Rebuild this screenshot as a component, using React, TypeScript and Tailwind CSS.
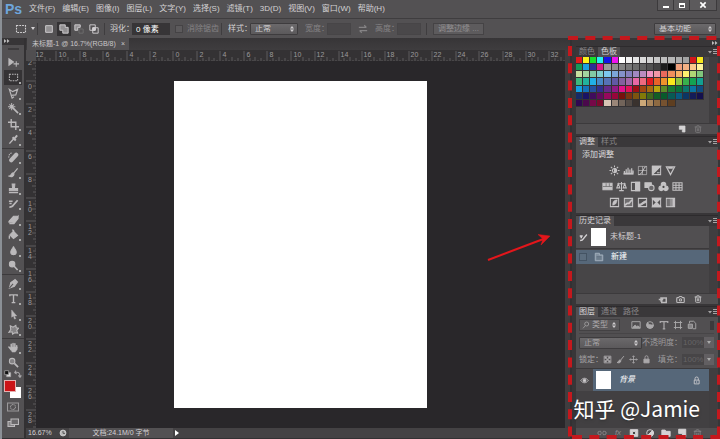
import type { ReactNode } from 'react'
import { Camera, Trash2 } from 'lucide-react'

const MENUS = ['文件(F)', '编辑(E)', '图像(I)', '图层(L)', '文字(Y)', '选择(S)', '滤镜(T)', '3D(D)', '视图(V)', '窗口(W)', '帮助(H)']

const SWATCHES = [
  '#e01a1c #fdf11a #18e02c #25f0f0 #1414e6 #ee12ee #ffffff #f1f1f1 #e4e4e4 #dadada #d0d0d0 #c7c7c7 #bebebe #b6b6b6 #adadad #a2a2a2 #d3181c #f8e71c',
  '#149a58 #1c9fe0 #2b2f96 #d8158c #9a9a9a #8e8e8e #838383 #787878 #6c6c6c #606060 #525252 #424242 #1d1d1d #000000 #f0a07c #f4b184 #f9c88c #fdf39a',
  '#c6dfa0 #a3d4a0 #82cba4 #7fcdca #7cc6ee #7ca6d8 #8492ca #8580bd #a188c0 #bb8cc0 #ee94c2 #f097a6 #ea6a5c #f0905c #f9b266 #fdf170 #b0d676 #80c67c',
  '#3cb87c #22b29c #22b0e6 #4688c6 #5672b6 #6258a4 #84609e #a466a8 #e868a4 #ee6a80 #e01c24 #e8622a #ee922c #fbe81c #8ec63e #38b04c #14a252 #12a090',
  '#149ee0 #1472b8 #24509e #302e8c #642a88 #901a84 #e0128a #e01458 #9c1014 #a04612 #a86a12 #b8a40e #5a8a28 #187a34 #0c7238 #0c746c #0a74a2 #104c80',
  '#162a66 #1a1464 #400c5c #620a5c #96085c #98063a #78100c #7a3410 #7c5410 #827a08 #42681c #145e26 #085a2c #085a54 #085a80 #0c3664 #141c58 #14104e',
  '#2e0850 #4a084c #760848 #7c0a2c #d8c4b4 #9a8678 #72645a #544a44 #3a322e #cca878 #a8845a #8e6a42 #765230 #5e3e20',
].map((row) => row.split(' '))

// width of one ruler unit
const UNIT = 11.72

function Icon({ children, className = 'size-3' }: { children: ReactNode; className?: string }) {
  return (
    <svg viewBox="0 0 12 12" className={`shrink-0 ${className}`} fill="none" stroke="currentColor" strokeWidth="1.1" aria-hidden="true">
      {children}
    </svg>
  )
}

const marquee = <path d="M1.5 2.5h9v7h-9z" strokeDasharray="1.8 1" />
const brush = <path d="M10.5 1.5 6 7M5.5 6.5c-2 0-1.5 3-4 3.5 2 1 5 .3 5-2.5z" fill="currentColor" strokeWidth="1.3" />
const move = <path d="M6 1v10M1 6h10M4.5 2.5 6 1l1.5 1.5M4.5 9.5 6 11l1.5-1.5M2.5 4.5 1 6l1.5 1.5M9.5 4.5 11 6 9.5 7.5" />
const newPage = <path d="M2 1.5h8.5v9H6.5v-4H2z" fill="currentColor" />

const TOOL_GROUPS: { name: string; icon: ReactNode }[][] = [
  [
    { name: 'Move', icon: <><path d="M1 2v7l5-3.5z" fill="currentColor" /><path d="M9 4.5v6M6 7.5h6" /></> },
    { name: 'Marquee', icon: marquee },
    { name: 'Lasso', icon: <path d="M1.5 1.5 5 4l5.500-2.500-2 6-5 .5zM3.500 8l1 3 2-1.500" strokeWidth="1.3" /> },
    { name: 'Magic wand', icon: <><path d="m5 5 6 6" strokeWidth="1.8" /><path d="M4 0v8M0 4h8M1.5 1.5l5 5M6.5 1.5l-5 5" /></> },
    { name: 'Crop', icon: <path d="M3.5 0v8.5H12M0 3.5h8.5V12" strokeWidth="1.5" /> },
    { name: 'Eyedropper', icon: <><path d="m1.5 10.5 5-5.5" strokeWidth="1.6" /><path d="m5 3.5 3.5 3.5M7 5l3-3.5" strokeWidth="2.2" /></> },
  ],
  [
    { name: 'Healing brush', icon: <><path d="m3.5 9 5.5-6" strokeWidth="4.5" strokeLinecap="round" /><path d="M4 1C1.500 1.500 .5 4 1 6.500" strokeDasharray="1.5 1" /></> },
    { name: 'Brush', icon: brush },
    { name: 'Clone stamp', icon: <path d="M4.5 1h3l-.5 5h3.5v2.5h-9V6H5zM1 10.5h10" fill="currentColor" /> },
    { name: 'History brush', icon: <><path d="M10.5 2.5 6 7.500c-1 2-2.500 2.500-4.500 2.500" strokeWidth="1.9" /><path d="M1 3.5h4M1.5 6H4" strokeWidth="1.5" /></> },
    { name: 'Eraser', icon: <path d="m1 8 5-5.5h5l-5 6.5H1zM6 9l5-6.500V5L6.500 10.500H1.500" fill="currentColor" /> },
    { name: 'Paint bucket', icon: <><path d="m2 6.5 4-4L10.5 7l-4.5 3.5z" fill="currentColor" /><path d="M6 5V1.5L4.5 1M1.5 7v3.5" strokeWidth="1.5" /></> },
    { name: 'Blur', icon: <path d="M6 1.5c.5 2 3 4 3 6a3 3 0 0 1-6 0c0-2 2.5-4 3-6z" fill="currentColor" /> },
    { name: 'Dodge', icon: <><circle cx="4.5" cy="4.5" r="3" fill="currentColor" /><path d="m6.5 6.5 4 4.5" strokeWidth="1.7" /></> },
  ],
  [
    { name: 'Pen', icon: <><path d="M1.5 11 3 5l3.5-2.5 3 3L7 9z" fill="currentColor" /><path d="m7 1.5 3.5 3.5" strokeWidth="2" /><path d="m1.5 11 4-4.5" stroke="#535153" /></> },
    { name: 'Type', icon: <path d="M2 3.5V2h8v1.5M6 2v8.5M4 10.5h4" strokeWidth="1.5" /> },
    { name: 'Path selection', icon: <path d="M4 1v8l2-1.5 1 3.5 1.5-.5-1.5-3h2.5z" fill="currentColor" strokeWidth=".5" /> },
    { name: 'Custom shape', icon: <path d="m2.5 2 3 1.5 3-2 .5 2.500 2.500.5-2 2.500 1 3-3-.5-2.500 1.500-.5-2.500-3.500.5 2-3z" fill="#858385" strokeWidth="1.2" /> },
  ],
  [
    { name: 'Hand', icon: <><path d="M3.5 6V2.5M5.5 5.5v-4M7.5 5.5V2M9.5 6.5V4M1 5.5l2.5 3" strokeWidth="1.6" strokeLinecap="round" /><path d="M3 5.5h7V8l-2 3H4.5L3 8z" fill="currentColor" strokeWidth=".5" /></> },
    { name: 'Zoom', icon: <><circle cx="4.5" cy="4.5" r="3" fill="#858385" /><path d="m7 7 4 4" strokeWidth="1.9" /></> },
  ],
]

const ADJUSTMENTS: { name: string; icon: ReactNode }[][] = [
  [
    { name: 'Brightness', icon: <><circle cx="6" cy="6" r="2.2" /><path d="M6 3.8a2.2 2.2 0 0 1 0 4.4z" fill="currentColor" /><path d="M6 .5v2M6 9.5v2M.5 6h2M9.5 6h2M2 2l1.5 1.5M8.5 8.5 10 10M10 2 8.500 3.500M3.500 8.500 2 10" /></> },
    { name: 'Levels', icon: <><path d="M.5 9.5h11" strokeWidth="2" /><path d="M1.5 9V6.5M3.5 9V4.5M5.5 9V3M7.5 9V5M9.5 9V3.5M11 9V6" strokeWidth="1.3" /></> },
    { name: 'Curves', icon: <><path d="M1.5 1.5h9v9h-9zM1.5 6h9M6 1.5v9" strokeWidth=".7" /><path d="M1.5 10.5c6-.5 4-8 9-9" /></> },
    { name: 'Exposure', icon: <><path d="M1.5 1.5h9v9h-9z" /><path d="M1.5 1.5h9l-9 9zM6.5 8.5h3" fill="currentColor" /></> },
    { name: 'Vibrance', icon: <path d="M1.5 2h9L6 10.5zM3.5 3.5h5" strokeWidth="1.3" /> },
  ],
  [
    { name: 'Hue', icon: <><path d="M1 2.5h10v7H1z" fill="currentColor" /><path d="M1 6h10M4.5 2.5V6M8 2.5V6" stroke="#6a686a" strokeWidth=".8" /></> },
    { name: 'Color balance', icon: <path d="M6 1v9M3.5 10.5h5M1.5 3h9M2.5 3 .8 7.5h3.400zM9.500 3 7.800 7.500h3.400z" /> },
    { name: 'Black and white', icon: <><path d="M1.5 1.5h9v9h-9z" /><path d="M6 1.5h4.5v9H6z" fill="currentColor" /></> },
    { name: 'Photo filter', icon: <><path d="M1 2h7v5H1z" fill="currentColor" /><circle cx="8" cy="7.5" r="3" fill="#6a686a" /></> },
    { name: 'Channel mixer', icon: <><circle cx="6" cy="4" r="2.5" fill="currentColor" /><circle cx="3.5" cy="8" r="2.5" fill="currentColor" /><circle cx="8.5" cy="8" r="2.5" fill="currentColor" /><circle cx="6" cy="6.500" r="1.2" fill="#444" stroke="none" /></> },
    { name: 'Color lookup', icon: <path d="M1 2h10v8H1zM1 4.7h10M1 7.3h10M4.3 2v8M7.7 2v8" /> },
  ],
  [
    { name: 'Invert', icon: <><path d="M1.5 1.5h9v9h-9z" /><path d="M4 9c0-4 1-5.5 5-6-1 4-1 5-5 6z" fill="currentColor" strokeWidth=".5" /></> },
    { name: 'Posterize', icon: <><path d="M1.5 1.5h9v9h-9z" fill="#6f6d6f" /><path d="M2 9 4.5 7l2 0L10 3" strokeWidth="1.8" /></> },
    { name: 'Threshold', icon: <><path d="M1.5 1.5h9v9h-9z" /><path d="M2 8c4 0 4-3.5 8-4v2c-4 .5-4 3.500-8 3.500z" fill="currentColor" /></> },
    { name: 'Selective color', icon: <><path d="M1.5 1.5h9v9h-9zM1.5 1.5l9 9M10.5 1.5l-9 9" /><path d="M1.5 1.5h9L6 6zM1.5 10.5h9L6 6z" fill="currentColor" /></> },
    { name: 'Gradient map', icon: <><path d="M1.5 1.5h9v9h-9z" /><path d="M2 2h3v8H2z" fill="#737173" stroke="none" /><path d="M5 2h3v8H5z" fill="#939193" stroke="none" /><path d="M8 2h2.500v8H8z" fill="currentColor" stroke="none" /></> },
  ],
]

function UpDown() {
  return (
    <svg viewBox="0 0 4 6" className="pointer-events-none absolute right-1 top-1/2 h-[6px] w-1 -translate-y-1/2 fill-[#cfcdcf]" aria-hidden="true">
      <path d="M0 2.5 2 0l2 2.500zM0 3.500 2 6l2-2.500z" />
    </svg>
  )
}

function Select({ label, value, className }: { label: string; value: string; className: string }) {
  return (
    <div className={`relative h-3 ${className}`}>
      <select
        aria-label={label}
        className="block size-full appearance-none rounded-[1px] border border-[#3e3c3e] bg-linear-to-b from-[#6b696b] to-[#5b595b] pl-1 leading-none text-inherit"
      >
        <option>{value}</option>
      </select>
      <UpDown />
    </div>
  )
}

function Divider() {
  return <span className="h-3 w-px shrink-0 bg-[#3f3d3f]" />
}

function MenuBar() {
  return (
    <header className="flex h-[18px] items-center bg-[#535153] pl-[3px]">
      <span className="w-6 text-[14px] font-bold leading-none text-[#6ea6dc]">Ps</span>
      <nav className="flex gap-[7px] whitespace-nowrap">
        {MENUS.map((menu) => (
          <button key={menu} type="button">{menu}</button>
        ))}
      </nav>
      <div className="ml-auto mr-[3px] flex h-[11px] self-start divide-x divide-[#3c3a3c] border border-t-0 border-[#3c3a3c] bg-[#5c5a5c]">
        <button type="button" aria-label="Minimize" className="flex w-4 items-center justify-center">
          <span className="mt-1 h-[2px] w-[6px] bg-white" />
        </button>
        <button type="button" aria-label="Maximize" className="flex w-4 items-center justify-center">
          <span className="h-[5px] w-[6px] border border-t-2 border-white" />
        </button>
        <button type="button" aria-label="Close" className="flex w-[26px] items-center justify-center text-white">
          <Icon className="size-2"><path d="m2 2 8 8M10 2l-8 8" strokeWidth="2.4" /></Icon>
        </button>
      </div>
    </header>
  )
}

function OptionsBar() {
  return (
    <div className="flex h-5 items-center border-t border-[#3f3d3f] bg-[#535153] pl-[13px] pr-1">
      <div className="flex w-[22px] items-center gap-1">
        <Icon>{marquee}</Icon>
        <svg viewBox="0 0 4 3" className="h-[3px] w-1 fill-current"><path d="M0 0h4L2 3z" /></svg>
      </div>
      <Divider />
      <div className="flex w-[66px] items-center gap-px pl-1">
        <button type="button" aria-label="New selection" className="flex size-[14px] items-center justify-center">
          <Icon className="size-[10px]"><path d="M2 2h8v8H2z" fill="#929092" /></Icon>
        </button>
        <button type="button" aria-label="Add to selection" className="flex size-[14px] items-center justify-center bg-[#343234]">
          <Icon className="size-[10px]"><path d="M1 1h6.5v3H11v7H4.5V7.5H1z" fill="#929092" /></Icon>
        </button>
        <button type="button" aria-label="Subtract from selection" className="flex size-[14px] items-center justify-center">
          <Icon className="size-[10px]"><path d="M1 1h6.5v3h-3v3.5H1z" fill="#929092" /><path d="M6 6h5v5H6z" stroke="#6f6d6f" /></Icon>
        </button>
        <button type="button" aria-label="Intersect selections" className="flex size-[14px] items-center justify-center">
          <Icon className="size-[10px]"><path d="M1 1h6.5v6.5H1zM4.5 4.5H11V11H4.5z" /><path d="M4.5 4.5h3v3h-3z" fill="currentColor" /></Icon>
        </button>
      </div>
      <Divider />
      <label className="flex items-center whitespace-nowrap pl-[5px]">
        <span className="w-[22px]">羽化：</span>
        <input defaultValue="0 像素" className="h-3 w-[38px] bg-[#373537] pl-1 text-white" />
      </label>
      <label className="flex w-[51px] items-center gap-1 whitespace-nowrap pl-[5px] text-[#858385]">
        <input type="checkbox" disabled className="size-2 appearance-none border border-[#454345] bg-[#5c5a5c]" />
        消除锯齿
      </label>
      <Divider />
      <div className="flex items-center pl-[6px]">
        <span className="w-[22px] whitespace-nowrap">样式：</span>
        <Select label="样式" value="正常" className="w-12" />
      </div>
      <label className="flex items-center whitespace-nowrap pl-[7px] text-[#858385]">
        <span className="w-[22px]">宽度：</span>
        <input disabled className="h-3 w-6 border border-[#474547] bg-[#4a484a]" />
      </label>
      <button type="button" aria-label="Swap width and height" className="flex w-6 justify-center text-[#858385]">
        <Icon className="size-[10px]"><path d="M1 4h9M7.5 1.5 10 4M11 8H2M4.5 10.5 2 8" strokeWidth="1.5" /></Icon>
      </button>
      <label className="flex items-center whitespace-nowrap text-[#858385]">
        <span className="w-[22px]">高度：</span>
        <input disabled className="mr-[5px] h-3 w-6 border border-[#474547] bg-[#4a484a]" />
      </label>
      <Divider />
      <button type="button" className="ml-[6px] h-3 w-[51px] whitespace-nowrap border border-[#454345] bg-[#5d5b5d] leading-none text-[#908e90]">
        调整边缘 ...
      </button>
      <div className="ml-auto">
        <Select label="工作区" value="基本功能" className="w-[62px]" />
      </div>
    </div>
  )
}

function Toolbar() {
  return (
    <aside className="flex w-[22px] shrink-0 flex-col bg-[#535153]">
      <div className="h-[7px] shrink-0 bg-[#373537] pl-[2px]">
        <svg viewBox="0 0 6 5" className="h-[5px] w-[6px] fill-[#bbb]"><path d="M0 1v4l2.5-2zM3 1v4l2.500-2z" /></svg>
      </div>
      <div className="mx-auto mb-1 mt-[3px] h-[2px] w-[11px] bg-[#3e3c3e]" />
      {TOOL_GROUPS.map((group, index) => (
        <div key={index} className={`flex flex-col ${index < 3 ? 'border-b border-[#3c3a3c] pb-px' : ''}`}>
          {group.map((tool, i) => (
            <button
              key={tool.name}
              type="button"
              aria-label={tool.name}
              className={`relative mx-[2px] flex items-center justify-center text-[#bbb9bb] ${i % 2 ? 'h-[15px]' : 'h-4'} ${tool.name === 'Marquee' ? 'bg-[#353335]' : ''}`}
            >
              <Icon className="size-[11px]">{tool.icon}</Icon>
              {tool.name !== 'Move' && tool.name !== 'Zoom' && <span className="absolute bottom-px right-px size-[2px] bg-[#aaa]" />}
            </button>
          ))}
        </div>
      ))}
      <div className="flex h-2 items-center justify-between px-[2px] text-[#aaa8aa]">
        <Icon className="size-2"><path d="M4 4h6v6H4z" fill="#ddd" /><path d="M1 1h6v6H1z" fill="#111" /></Icon>
        <Icon className="size-2"><path d="M1 4c5-2 8 0 8 6M3 1 1 4l3 2M6.500 8 9 11l2-3" strokeWidth="1.6" /></Icon>
      </div>
      <div className="grid pl-[2px] pt-[2px]">
        <button type="button" aria-label="Background color" className="col-start-1 row-start-1 ml-[6px] mt-[7px] size-[11px] bg-white" />
        <button type="button" aria-label="Foreground color" className="col-start-1 row-start-1 size-3 border border-[#e4b0b0] bg-[#cb1418]" />
      </div>
      <button type="button" aria-label="Quick mask" className="mt-[3px] flex justify-center text-[#9a989a]">
        <Icon><path d="M.5 2h11v8H.5z" /><circle cx="6" cy="6" r="2.5" strokeDasharray="1 .5" /></Icon>
      </button>
      <button type="button" aria-label="Screen mode" className="mt-1 flex justify-center text-[#bbb9bb]">
        <Icon><path d="M1 4.5h6.5v5H1z" fill="#858385" /><path d="M4 2h7.5v5.5H4z" fill="#6a686a" /></Icon>
      </button>
    </aside>
  )
}

function Ruler({ vertical }: { vertical?: boolean }) {
  // the svg origin is the middle of the window, so the zero mark follows the centred page
  const middle = vertical ? 13.95 : 10.8
  const [first, last] = vertical ? [-2, 28] : [-12, 32]
  const ticks = Array.from({ length: 561 }, (_, i) => (i - 280) / 4).map((u) => ({ u, at: Math.round((u - middle) * UNIT) }))
  const size = (u: number) => (u % 2 === 0 ? 10 : u % 1 === 0 ? 4 : u % 0.5 === 0 ? 3 : 1)
  const lines = ticks
    .map(({ u, at }) => (vertical ? `M${10 - size(u)} ${at}.5H10` : `M${at}.5 ${11 - size(u)}V11`))
    .join('')
  const labels = ticks.filter(({ u }) => u % 2 === 0 && u >= first && u <= last)

  return (
    <svg className={vertical ? 'w-[10px] shrink-0 bg-[#343234]' : 'h-[11px] min-w-0 flex-1 bg-[#343234]'} aria-hidden="true">
      <svg x={vertical ? 0 : '50%'} y={vertical ? '50%' : 0} className="overflow-visible fill-[#9c9a9c] text-[7px]">
        <path d={lines} stroke="#5d5b5d" fill="none" />
        {labels.map(({ u, at }) =>
          vertical ? (
            String(Math.abs(u)).split('').map((digit, i) => (
              <text key={`${u}-${i}`} x="2" y={at + 7 + i * 6}>{digit}</text>
            ))
          ) : (
            <text key={u} x={at + 2} y="7">{Math.abs(u)}</text>
          ),
        )}
      </svg>
    </svg>
  )
}

function DocumentWindow() {
  return (
    <main className="flex min-w-0 flex-1 flex-col">
      <div className="flex h-3 shrink-0 bg-linear-to-b from-[#373537] to-[#3f3d3f] pl-px">
        <div className="flex w-[102px] items-center justify-between whitespace-nowrap bg-[#535153] pl-[5px] pr-1 text-[7px] text-[#c9c7c9]">
          未标题-1 @ 16.7%(RGB/8)
          <button type="button" aria-label="Close document">×</button>
        </div>
      </div>
      <div className="flex">
        <span className="h-[11px] w-[10px] bg-[#504e50]" />
        <Ruler />
        <span className="w-[5px] bg-[#3f3d3f]" />
      </div>
      <div className="flex min-h-0 flex-1">
        <Ruler vertical />
        <div className="flex flex-1 items-center justify-center bg-[#29272a] py-5">
          <div className="h-[327px] w-[253px] bg-white" />
        </div>
        <span className="w-[5px] bg-[#3f3d3f]" />
      </div>
      <footer className="flex h-[10px] shrink-0 items-center bg-[#444244] text-[#d5d3d5]">
        <span className="w-[31px] pl-[2px] text-[7px]">16.67%</span>
        <span className="flex w-3 justify-center">
          <Icon className="size-2"><circle cx="6" cy="6" r="4.5" fill="#bbb" /><path d="M6 3v3.5h3" stroke="#555" strokeWidth="1.5" /></Icon>
        </span>
        <span className="flex h-full w-[104px] items-center justify-center bg-[#535153] text-[7px]">文档:24.1M/0 字节</span>
        <button type="button" aria-label="Status options" className="px-[2px]">
          <svg viewBox="0 0 4 6" className="h-[6px] w-1 fill-white"><path d="M0 0v6l4-3z" /></svg>
        </button>
      </footer>
    </main>
  )
}

function Tabs({ names, active }: { names: string[]; active: string }) {
  return (
    <div className="flex h-[11px] shrink-0 border-t border-[#2d2b2d] bg-[#3a383a]">
      {names.map((name) => (
        <button
          key={name}
          type="button"
          className={`whitespace-nowrap px-[3px] ${name === active ? 'bg-[#514f51] text-[#d3d1d3]' : 'text-[#888688]'}`}
        >
          {name}
        </button>
      ))}
      <button type="button" aria-label="Panel menu" className="ml-auto pr-px text-[#a5a3a5]">
        <svg viewBox="0 0 9 6" className="h-[6px] w-[9px] fill-current"><path d="M0 2h4L2 4.5zM5 0h4v1H5zM5 2h4v1H5zM5 4h4v1H5z" /></svg>
      </button>
    </div>
  )
}

function SwatchesPanel() {
  return (
    <section>
      <Tabs names={['颜色', '色板']} active="色板" />
      <div className="flex h-[66px]">
        <div className="flex-1 bg-[#4b494b]">
          <div className="grid h-[50px] w-32 grid-cols-[repeat(18,minmax(0,1fr))] grid-rows-7">
            {SWATCHES.flat().map((color, i) => (
              <span key={i} className="border-b border-r border-[#343234]" style={{ backgroundColor: color }} />
            ))}
          </div>
        </div>
        <span className="w-[9px] bg-[#403e40]" />
      </div>
      <div className="flex h-[11px] items-center justify-end gap-2 border-t border-[#3c3a3c] bg-[#514f51] pr-4">
        <button type="button" aria-label="New swatch" className="text-[#d5d3d5]"><Icon className="size-2">{newPage}</Icon></button>
        <button type="button" aria-label="Delete swatch" className="text-[#777577]"><Trash2 size={8} strokeWidth={3} /></button>
      </div>
    </section>
  )
}

function AdjustmentsPanel() {
  return (
    <section className="mt-[2px]">
      <Tabs names={['调整', '样式']} active="调整" />
      <div className="h-[66px] bg-[#514f51] pt-[2px] text-[#c5c3c5]">
        <h2 className="pl-[6px] leading-[11px] text-[#dddbdd]">添加调整</h2>
        <div className="flex flex-col gap-1 pr-[18px] pt-1">
          {ADJUSTMENTS.map((row, i) => (
            <div key={i} className="flex justify-center gap-1 pl-2">
              {row.map((item) => (
                <button key={item.name} type="button" aria-label={item.name} className="flex h-3 w-[10px] items-center justify-center">
                  <Icon className="size-[11px]">{item.icon}</Icon>
                </button>
              ))}
            </div>
          ))}
        </div>
      </div>
    </section>
  )
}

function HistoryPanel() {
  return (
    <section className="mt-[2px]">
      <Tabs names={['历史记录']} active="历史记录" />
      <div className="flex h-[67px]">
        <div className="flex-1 bg-[#474547]">
          <div className="flex h-[23px] items-center border-b border-[#3b393b] bg-[#514f51] pl-[3px]">
            <Icon className="size-[9px]"><path d="M10.5 2 6 7.5c-1 2-2 2.500-4.500 2.500M1 4h4M2 6h2" strokeWidth="1.8" /></Icon>
            <span className="ml-[3px] h-[18px] w-[15px] bg-white" />
            <span className="ml-1">未标题-1</span>
          </div>
          <label className="mt-px flex h-[14px] items-center bg-[#566779]">
            <input type="checkbox" className="mx-[3px] size-2 appearance-none border border-[#445363] bg-[#5c6d7e]" />
            <Icon className="ml-1 size-[10px] text-[#a3b0bd]"><path d="M1.5 1.5h5v2h4v7h-9z" fill="#8291a0" /><path d="M3 5.5h6M3 7h6M3 8.5h6" stroke="#4f5f70" strokeWidth=".7" /></Icon>
            <span className="ml-[7px] text-white">新建</span>
          </label>
        </div>
        <span className="w-[9px] bg-[#403e40]" />
      </div>
      <div className="flex h-[11px] items-center justify-end gap-[9px] border-t border-[#3c3a3c] bg-[#514f51] pr-4 text-[#bbb9bb]">
        <button type="button" aria-label="New document from state"><Icon className="size-[9px]"><path d="M5 4h6v6H5zM1 6h6M4 3v6" strokeWidth="2" /></Icon></button>
        <button type="button" aria-label="New snapshot"><Camera size={9} strokeWidth={3} /></button>
        <button type="button" aria-label="Delete state"><Trash2 size={8} strokeWidth={3} /></button>
      </div>
    </section>
  )
}

function Percent({ label }: { label: string }) {
  return (
    <label className="ml-auto flex items-center whitespace-nowrap text-[#9d9b9d]">
      {label}：
      <input defaultValue="100%" className="h-[11px] w-[22px] bg-[#474547] pl-px text-[#666466]" />
      <span className="flex h-[11px] w-[10px] items-center justify-center bg-[#625f62]">
        <svg viewBox="0 0 4 3" className="h-[3px] w-1 fill-[#aaa]"><path d="M0 0h4L2 3z" /></svg>
      </span>
    </label>
  )
}

function LayersPanel() {
  return (
    <section className="mt-[2px] flex flex-1 flex-col">
      <Tabs names={['图层', '通道', '路径']} active="图层" />
      <div className="flex h-[51px] flex-col bg-[#514f51] pl-[3px] pr-1 text-[#aaa8aa]">
        <div className="flex h-[17px] items-center border-b border-[#474547]">
          <div className="relative h-3 w-[41px]">
            <select aria-label="图层类型" className="block size-full appearance-none border border-[#434143] bg-[#5b595b] pl-3">
              <option>类型</option>
            </select>
            <Icon className="pointer-events-none absolute left-[3px] top-[2px] size-2"><circle cx="7" cy="4.5" r="3" /><path d="M5 7 1.5 11" /></Icon>
            <UpDown />
          </div>
          <div className="ml-[11px] flex flex-1 items-center gap-1">
            <Icon className="size-[10px]"><path d="M1 2h10v8H1z" /><path d="m2 9 3-3 2 2 1.5-1L10.5 9z" fill="currentColor" /></Icon>
            <Icon className="size-[10px]"><circle cx="6" cy="6" r="4" /><path d="M3 3c1 3 4 3 7 3a4 4 0 0 1-8 0z" fill="currentColor" /></Icon>
            <Icon className="size-[10px]"><path d="M1.5 3.5V2h9v1.5M6 2v8.5M4.5 10.5h3" strokeWidth="1.5" /></Icon>
            <Icon className="size-[10px]"><path d="M3 1v10M9 1v10M1 3h10M1 9h10" /></Icon>
            <Icon className="size-[10px]"><path d="M3 4V1.5h5L10.5 4v6.5H7" /><path d="M1.5 5h5v5h-5z" fill="#858385" /></Icon>
            <span className="ml-auto h-[9px] w-1 bg-[#3c3a3c]" />
          </div>
        </div>
        <div className="flex h-[17px] items-center">
          <Select label="混合模式" value="正常" className="w-[63px]" />
          <Percent label="不透明度" />
        </div>
        <div className="flex h-[17px] items-center">
          <span className="w-6 whitespace-nowrap">锁定：</span>
          <div className="flex items-center gap-1">
            <Icon className="size-[9px]"><path d="M1.5 1.5h9v9h-9z" /><path d="M2 2h3v3H2zM7 2h3v3H7zM4.5 4.5h3v3h-3zM2 7h3v3H2zM7 7h3v3H7z" fill="currentColor" stroke="none" /></Icon>
            <Icon className="size-[9px]">{brush}</Icon>
            <Icon className="size-[9px]">{move}</Icon>
            <Icon className="size-[9px]"><path d="M2.5 5.5h7v5h-7z" fill="currentColor" /><path d="M4 5.5V3a2 2 0 0 1 4 0v2.5" /></Icon>
          </div>
          <Percent label="填充" />
        </div>
      </div>
      <div className="flex flex-1">
        <div className="flex-1 bg-[#424042]">
          <div className="flex h-[23px] items-center border-t border-[#3b393b] bg-[#566779]">
            <button type="button" aria-label="Toggle layer" className="flex h-full w-[17px] items-center justify-center bg-[#4c4a4c]">
              <Icon className="size-[9px]"><path d="M1 6c3-4 7-4 10 0-3 4-7 4-10 0z" /><circle cx="6" cy="6" r="1.8" fill="currentColor" /></Icon>
            </button>
            <span className="ml-[3px] h-[18px] w-[15px] bg-white" />
            <span className="ml-2 italic text-white">背景</span>
            <Icon className="ml-auto mr-2 size-[9px]"><path d="M3 5.5h6.5v5H3z" /><path d="M4 5.5V3.5a2.2 2.2 0 0 1 4.400 0v2M6.200 7v2" /></Icon>
          </div>
        </div>
        <span className="w-[9px] bg-[#403e40]" />
      </div>
      <div className="flex h-[10px] items-center justify-end gap-[6px] bg-[#514f51] pr-4 text-[#8c8a8c]">
        <button type="button" aria-label="Link layers"><Icon className="size-[10px]"><path d="M5 4H3a2 2 0 0 0 0 4h2M7 4h2a2 2 0 0 1 0 4H7M4 6h4" /></Icon></button>
        <button type="button" aria-label="Layer style" className="w-[10px] italic leading-none">fx</button>
        <button type="button" aria-label="Add mask" className="text-[#d5d3d5]"><Icon className="size-[10px]"><path d="M1.5 2h9v8h-9z" fill="currentColor" /><circle cx="6" cy="6" r="2" fill="#444" /></Icon></button>
        <button type="button" aria-label="Adjustment layer" className="text-[#d5d3d5]"><Icon className="size-[10px]"><circle cx="6" cy="6" r="4" /><path d="M9 3a4 4 0 0 1-6 6z" fill="currentColor" /></Icon></button>
        <button type="button" aria-label="New group" className="text-[#d5d3d5]"><Icon className="size-[10px]"><path d="M1 2.5h4l1 1.5h5v6H1z" fill="currentColor" /></Icon></button>
        <button type="button" aria-label="New layer" className="text-[#d5d3d5]"><Icon className="size-[10px]">{newPage}</Icon></button>
        <button type="button" aria-label="Delete layer"><Trash2 size={9} strokeWidth={2} /></button>
      </div>
    </section>
  )
}

export default function App() {
  return (
    <div className="relative flex min-h-screen flex-col overflow-hidden border-l-2 border-[#8b9096] bg-[#333133] font-['Liberation_Sans','Noto_Sans_CJK_SC',sans-serif] text-[8px] leading-[10px] text-[#d3d1d3]">
      <MenuBar />
      <OptionsBar />
      <div className="flex flex-1 gap-[2px] pb-px">
        <Toolbar />
        <DocumentWindow />
        <aside className="flex w-[148px] shrink-0 flex-col bg-[#383638] pl-1 pr-[2px]">
          <div className="flex h-2 shrink-0 items-center justify-end">
            <svg viewBox="0 0 6 5" className="h-[5px] w-[6px] fill-[#bbb]"><path d="M0 1v4l2.5-2zM3 1v4l2.500-2z" /></svg>
          </div>
          <SwatchesPanel />
          <AdjustmentsPanel />
          <HistoryPanel />
          <LayersPanel />
        </aside>
      </div>

      {/* annotations over the workspace */}
      <svg className="pointer-events-none absolute bottom-0 right-0 top-9 h-auto w-[152px]" viewBox="0 0 152 403" preserveAspectRatio="none" fill="none" stroke="#c4181d" strokeWidth="4" strokeDasharray="10 7.3" aria-hidden="true">
        <path d="M0 2h152M2 10v393M151 10v393M4 401h148" />
      </svg>
      <svg className="pointer-events-none absolute right-[168px] top-[232px] h-8 w-[66px]" viewBox="0 0 66 32" fill="none" stroke="#e3161b" strokeWidth="2" aria-hidden="true">
        <path d="M2 28 60 6" />
        <path d="m64 4-12-1.500 5 4.500-2 6z" fill="#e3161b" strokeWidth=".5" />
      </svg>
      <p className="pointer-events-none absolute bottom-4 right-5 whitespace-nowrap font-['Noto_Sans_CJK_SC',sans-serif] text-[21px] leading-[30px] text-white text-shadow-md">
        知乎 @Jamie
      </p>
    </div>
  )
}
